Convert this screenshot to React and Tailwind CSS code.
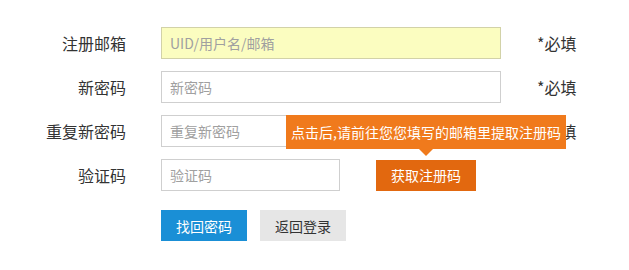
const Row = ({ label, children, note }) => (
  <div className="flex items-center h-8 mb-3">
    <label className="w-[126px] text-right text-[16px] text-[#333]">{label}</label>
    <div className="ml-[35px] flex items-center">{children}</div>
    {note && <span className="ml-9 text-[16px] text-[#333]">{note}</span>}
  </div>
);

const App = () => {
  return (
    <div
      className="w-[629px] h-[270px] bg-white pt-[27px]"
      style={{ fontFamily: '"Microsoft YaHei", "Noto Sans CJK SC", sans-serif' }}
    >
      <Row label="注册邮箱" note="*必填">
        <input
          type="text"
          placeholder="UID/用户名/邮箱"
          className="w-[340px] h-8 px-2 bg-[#fbfdc0] border border-[#d2d2a8] text-sm placeholder:text-[#a0a0a0] outline-none"
        />
      </Row>
      <Row label="新密码" note="*必填">
        <input
          type="password"
          placeholder="新密码"
          className="w-[340px] h-8 px-2 bg-white border border-[#cfcfcf] text-sm placeholder:text-[#a0a0a0] outline-none"
        />
      </Row>
      <Row label="重复新密码" note="*必填">
        <input
          type="password"
          placeholder="重复新密码"
          className="w-[340px] h-8 px-2 bg-white border border-[#cfcfcf] text-sm placeholder:text-[#a0a0a0] outline-none"
        />
      </Row>
      <Row label="验证码">
        <input
          type="text"
          placeholder="验证码"
          className="w-[179px] h-8 px-2 bg-white border border-[#cfcfcf] text-sm placeholder:text-[#a0a0a0] outline-none"
        />
        <div className="relative ml-9">
          {/* tooltip over the note of the row above */}
          <div className="absolute left-1/2 -translate-x-1/2 bottom-[42px] w-[280px] h-[34px] bg-[#f07a1c] text-white text-sm flex items-center justify-center whitespace-nowrap">
            点击后,请前往您您填写的邮箱里提取注册码
            <span className="absolute left-1/2 -translate-x-1/2 top-full w-0 h-0 border-x-[7px] border-x-transparent border-t-[7px] border-t-[#f07a1c]" />
          </div>
          <button className="w-[100px] h-[31px] bg-[#e2680f] text-white text-sm">获取注册码</button>
        </div>
      </Row>
      <div className="flex ml-[161px] mt-[19px] gap-[13px]">
        <button className="w-[86px] h-[31px] bg-[#1a8fd6] text-white text-sm">找回密码</button>
        <button className="w-[86px] h-[31px] bg-[#e6e6e6] text-[#333] text-sm">返回登录</button>
      </div>
    </div>
  );
};

export default App;
